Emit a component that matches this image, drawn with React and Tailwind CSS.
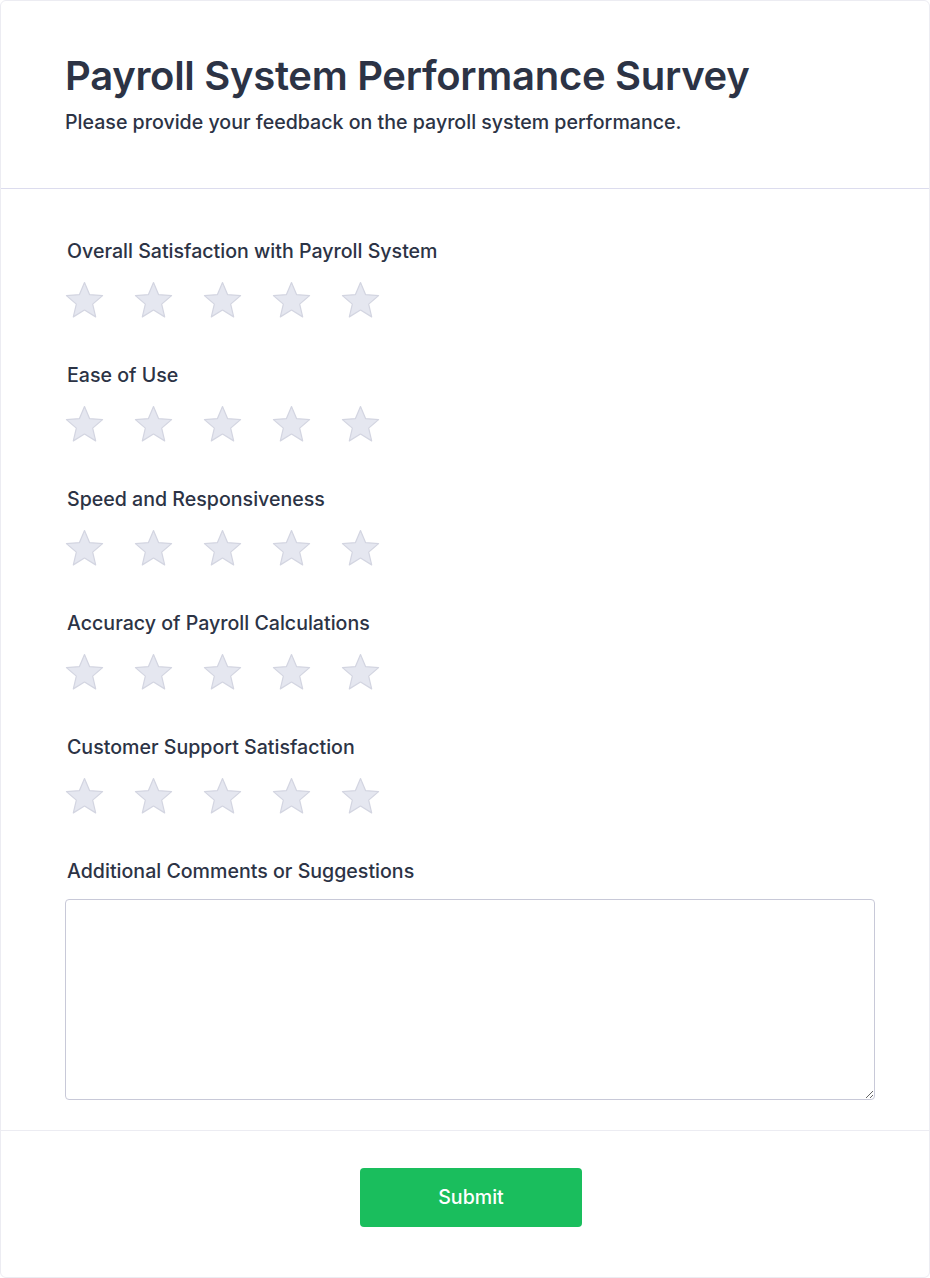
const questions = [
  'Overall Satisfaction with Payroll System',
  'Ease of Use',
  'Speed and Responsiveness',
  'Accuracy of Payroll Calculations',
  'Customer Support Satisfaction',
];

// five-pointed star in a 40x40 box
const starPoints = Array.from({ length: 10 }, (_, i) => {
  const r = i % 2 === 0 ? 19 : 8.6;
  const a = -Math.PI / 2 + (i * Math.PI) / 5;
  return `${(19.5 + r * Math.cos(a)).toFixed(2)},${(20.5 + r * Math.sin(a)).toFixed(2)}`;
}).join(' ');

function Star() {
  return (
    <svg width="40" height="40" viewBox="0 0 40 40" className="block">
      <polygon points={starPoints} fill="#e5e7f0" stroke="#d3d5e1" strokeWidth="1.2" strokeLinejoin="round" />
    </svg>
  );
}

function RatingQuestion({ label }) {
  return (
    <div className="mb-10">
      <div className="pl-[2px] text-[19.6px] font-medium leading-7 text-[#2c3345]">{label}</div>
      <div className="mt-4 flex gap-[29px]">
        {[1, 2, 3, 4, 5].map((n) => (
          <button key={n} type="button" className="p-0">
            <Star />
          </button>
        ))}
      </div>
    </div>
  );
}

export default function App() {
  return (
    <div className="w-[930px] h-[1278px] bg-white font-['Inter',sans-serif]">
      <div className="h-[1278px] rounded-md border border-[#ececf2] bg-white flex flex-col">
        <div className="pl-16 pr-14 pt-[51px] pb-[52px] border-b border-[#dcdcee]">
          <h1 className="text-[40px] leading-[48px] font-semibold tracking-[-0.3px] text-[#2c3345]">Payroll System Performance Survey</h1>
          <p className="mt-2 text-[19.6px] leading-7 font-medium text-[#2c3345]">Please provide your feedback on the payroll system performance.</p>
        </div>

        <div className="pl-16 pr-[54px] pt-12 pb-[30px] border-b border-[#ececf2]">
          {questions.map((q) => (
            <RatingQuestion key={q} label={q} />
          ))}
          <div className="pl-[2px] text-[19.6px] font-medium leading-7 text-[#2c3345]">Additional Comments or Suggestions</div>
          <textarea className="mt-[14px] block w-full h-[201px] rounded border border-[#c8c9d8] outline-none p-3 text-base text-[#2c3345]" />
        </div>

        <div className="flex justify-center pl-3 pt-[37px]">
          <button type="button" className="w-[222px] h-[59px] rounded bg-[#1abe5d] text-[19.6px] font-medium text-white">
            Submit
          </button>
        </div>
      </div>
    </div>
  );
}
